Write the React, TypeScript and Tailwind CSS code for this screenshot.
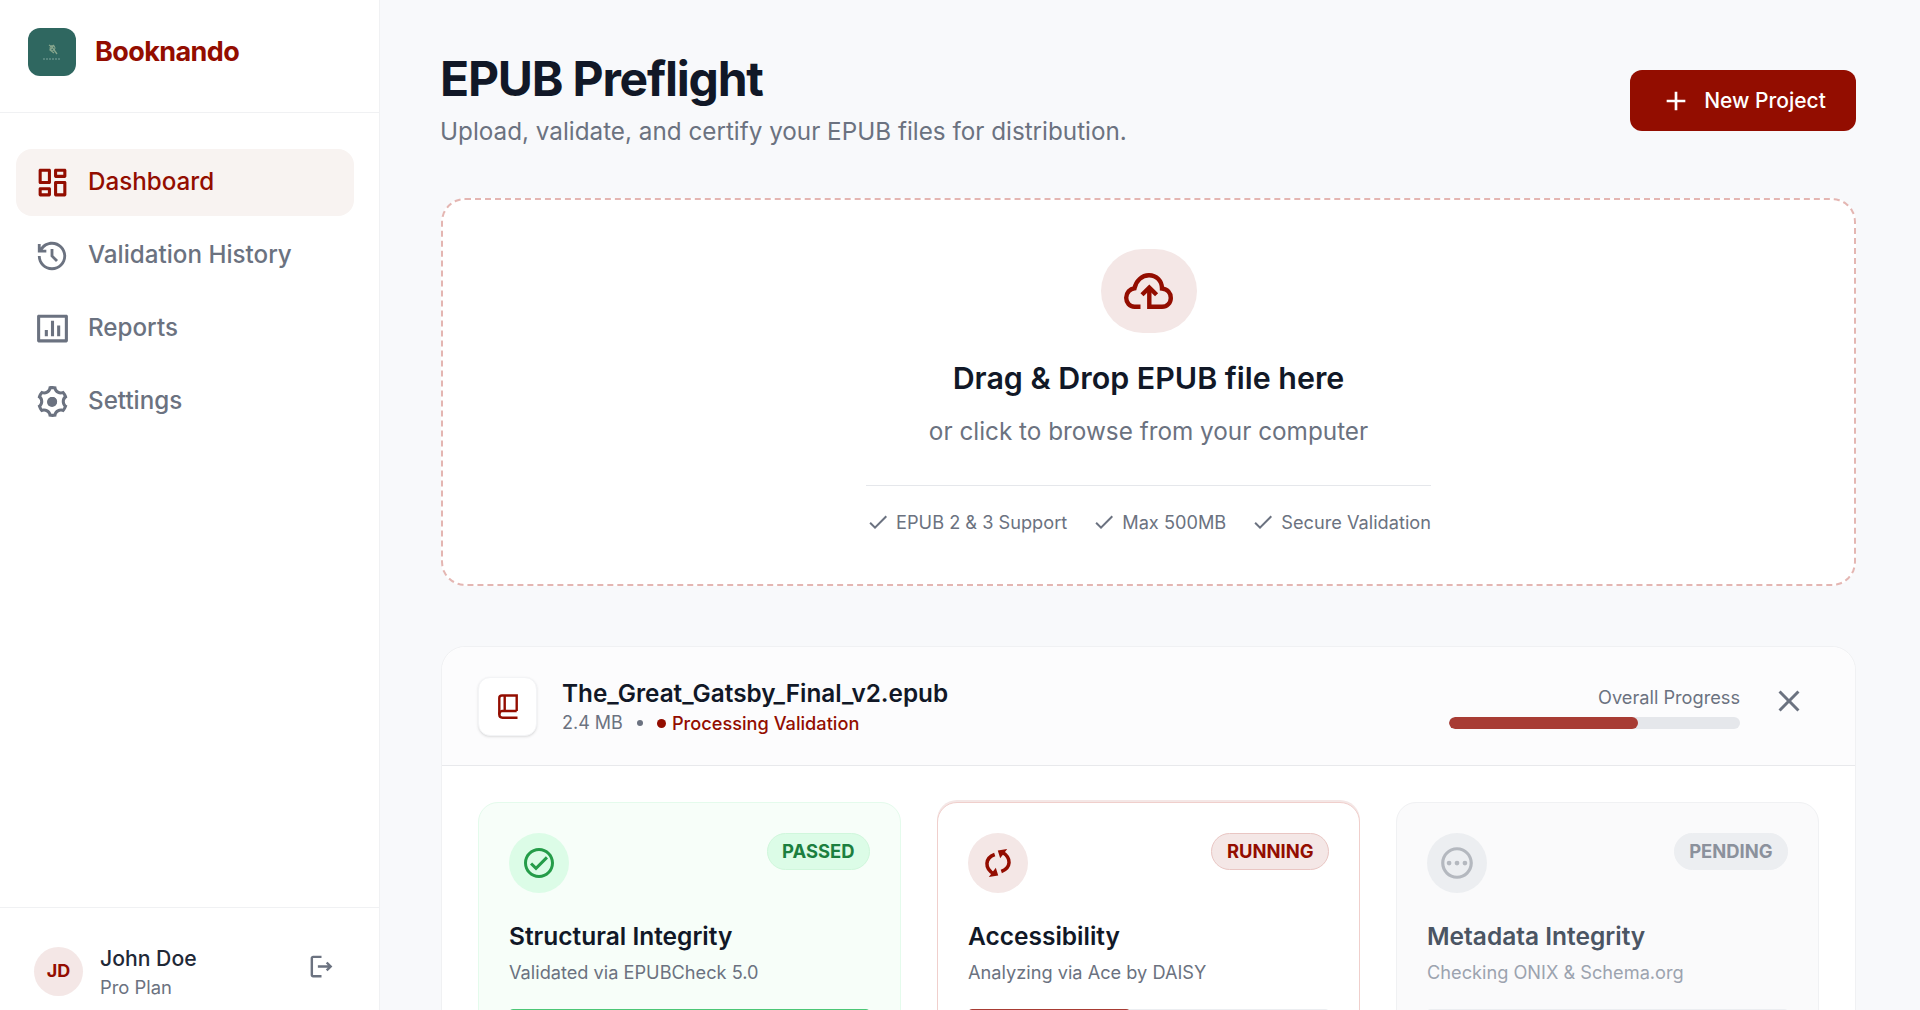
import type { ReactNode } from "react";
import {
  MdAdd,
  MdCheck,
  MdClose,
  MdOutlineCheckCircle,
  MdOutlineLogout,
  MdOutlinePending,
} from "react-icons/md";
import { RiBarChartBoxLine, RiDashboardLine, RiHistoryLine, RiSettings3Line } from "react-icons/ri";

function GearIcon() {
  return (
    <span className="relative flex shrink-0">
      <RiSettings3Line className="size-[37px]" />
      <span className="absolute inset-0 m-auto size-[10px] rounded-full bg-current" />
    </span>
  );
}

const navItems = [
  { label: "Dashboard", icon: <RiDashboardLine className="size-[37px] shrink-0" />, active: true },
  { label: "Validation History", icon: <RiHistoryLine className="size-[34px] shrink-0" /> },
  { label: "Reports", icon: <RiBarChartBoxLine className="size-[37px] shrink-0" /> },
  { label: "Settings", icon: <GearIcon /> },
];

function LogoMark() {
  return (
    <svg viewBox="0 0 48 48" className="size-12 rounded-xl bg-[#2f6760]">
      <path d="M21 17l3 2 5 7M26 17l-4 5 4 3" fill="none" stroke="#86a58c" strokeWidth="1.3" />
      <circle cx="24.5" cy="20" r="2.5" fill="none" stroke="#8aa890" />
      <path d="M15 31h18" stroke="#7fa59c" strokeWidth="1" strokeDasharray="2 1" />
    </svg>
  );
}

function CloudUpload() {
  return (
    <svg viewBox="0 0 49 36" className="h-9 w-[49px]" fill="none" stroke="#930d00" strokeWidth="4.4">
      <path d="M16.5 33.8H10.5C5.5 33.8 2.2 29.5 2.2 24.8C2.2 19.8 6 15.7 10.5 15.2C12 8 17.8 2.2 25 2.2C32.5 2.2 38 8 38 15.5C43.3 16 46.8 20 46.8 25C46.8 30 43 33.8 38 33.8H25.3V15" />
      <path d="M18 21.8L25.3 14.6L32.6 21.8" />
    </svg>
  );
}

function BookIcon() {
  return (
    <svg viewBox="0 0 20 25" className="h-[25px] w-5" fill="none" stroke="#930d00" strokeWidth="2.4">
      <path d="M18.7 17V1.5H4C2.5 1.5 1.3 2.6 1.3 4V20.5C1.3 22.4 2.6 23.7 4.5 23.7H19.5" />
      <path d="M6.7 1.5V17M18.7 17H4C2.4 17 1.3 18.6 1.3 20.4" />
    </svg>
  );
}

function SyncIcon() {
  return (
    <svg viewBox="0 0 60 60" className="size-[60px]" fill="none" stroke="#930d00" strokeWidth="3.5">
      <path d="M26.7 21.5C17 25 16 35 26 41" />
      <path d="M33.3 38.5C43 35 44 25 34 19" />
      <path d="M20.8 44L30.2 42.5L27.8 34.8Z" fill="#930d00" stroke="none" />
      <path d="M39.2 16L29.8 17.5L32.2 25.2Z" fill="#930d00" stroke="none" />
    </svg>
  );
}

function Sidebar() {
  return (
    <aside className="flex h-full w-[380px] shrink-0 flex-col border-r border-[#f0f1f3] bg-white">
      <div className="flex h-[113px] shrink-0 items-center gap-[19px] border-b border-[#f0f1f3] pb-2 pl-7">
        <LogoMark />
        <span className="text-[27px] font-bold tracking-[-0.6px] text-[#930d00]">Booknando</span>
      </div>
      <nav className="flex flex-1 flex-col gap-[6px] pl-4 pr-[25px] pt-9">
        {navItems.map((item) => (
          <a
            key={item.label}
            className={
              item.active
                ? "flex h-[67px] items-center gap-5 rounded-2xl bg-[#f8f3f1] pl-5 text-[#930d00]"
                : "flex h-[67px] items-center gap-5 rounded-2xl pl-5 text-[#6b7280]"
            }
          >
            <span className="flex w-8 justify-center">{item.icon}</span>
            <span className="text-[24.2px] font-medium">{item.label}</span>
          </a>
        ))}
      </nav>
      <div className="flex h-[103px] shrink-0 items-center border-t border-[#f0f1f3] pl-[34px] pr-[43px] pt-6">
        <div className="flex size-[49px] items-center justify-center rounded-full bg-[#f4e7e6] text-lg font-bold text-[#930d00]">
          JD
        </div>
        <div className="ml-[17px] flex-1">
          <p className="text-[21.2px] font-medium leading-8 text-[#1f2937]">John Doe</p>
          <p className="text-[18.4px] leading-[26px] text-[#6b7280]">Pro Plan</p>
        </div>
        <MdOutlineLogout className="mb-[10px] size-[29px] text-[#6b7280]" />
      </div>
    </aside>
  );
}

function DropZone() {
  const features = ["EPUB 2 & 3 Support", "Max 500MB", "Secure Validation"];
  return (
    <section className="mt-[50px] flex h-[388px] flex-col items-center rounded-3xl border-2 border-dashed border-[#e4b6b2] bg-white pt-[49px]">
      <div className="flex h-[84px] w-24 items-center justify-center rounded-full bg-[#f4e7e6]">
        <CloudUpload />
      </div>
      <h2 className="mt-[23px] text-[30.4px] font-semibold leading-[44px] text-[#111827]">
        Drag &amp; Drop EPUB file here
      </h2>
      <p className="mt-[13px] text-[24.3px] leading-9 text-[#6b7280]">or click to browse from your computer</p>
      <div className="mt-9 flex gap-[25px] border-t border-[#e5e7eb] pt-[22px]">
        {features.map((f) => (
          <span key={f} className="flex items-center gap-[6px] text-[18.2px] leading-7 text-[#6b7280]">
            <MdCheck className="size-6 shrink-0" />
            {f}
          </span>
        ))}
      </div>
    </section>
  );
}

type CheckCardProps = {
  icon: ReactNode;
  iconClass: string;
  badge: string;
  badgeClass: string;
  title: string;
  titleClass: string;
  desc: string;
  descClass: string;
  cardClass: string;
  trackClass: string;
  fillClass: string;
  percent: number;
};

function CheckCard(props: CheckCardProps) {
  return (
    <div className={`rounded-[20px] p-[30px] ${props.cardClass}`}>
      <div className="flex items-start justify-between">
        <div className={`flex size-[60px] items-center justify-center rounded-full ${props.iconClass}`}>
          {props.icon}
        </div>
        <span className={`flex h-[37px] items-center rounded-full border px-[14.5px] text-[18.4px] font-bold ${props.badgeClass}`}>
          {props.badge}
        </span>
      </div>
      <h3 className={`mt-[25px] text-[24.5px] font-semibold leading-9 ${props.titleClass}`}>{props.title}</h3>
      <p className={`mt-1 text-[18.2px] leading-7 ${props.descClass}`}>{props.desc}</p>
      <div className={`mt-[23px] h-2 overflow-hidden rounded-full ${props.trackClass}`}>
        <div className={`h-full rounded-full ${props.fillClass}`} style={{ width: `${props.percent}%` }} />
      </div>
    </div>
  );
}

function ValidationPanel() {
  return (
    <section className="mt-[60px] rounded-t-3xl border border-[#f0f1f3] bg-white">
      <div className="flex h-[119px] items-center rounded-t-3xl border-b border-[#e8e9ec] bg-[#fcfcfd] pl-[36px] pr-[48px]">
        <div className="flex size-[59px] items-center justify-center rounded-xl border border-[#f3f4f6] bg-white shadow-sm">
          <BookIcon />
        </div>
        <div className="ml-[25px] flex-1">
          <p className="text-[24.3px] font-semibold leading-8 text-[#111827]">The_Great_Gatsby_Final_v2.epub</p>
          <div className="mt-[2px] flex items-center text-lg leading-6 text-[#6b7280]">
            <span>2.4 MB</span>
            <span className="ml-[14px] size-[6px] rounded-full bg-[#6b7280]" />
            <span className="ml-[14px] size-[9px] rounded-full bg-[#930d00]" />
            <span className="ml-[6px] text-[18.2px] font-medium text-[#930d00]">Processing Validation</span>
          </div>
        </div>
        <div className="flex w-[291px] flex-col items-end">
          <span className="text-[18.2px] leading-7 text-[#6b7280]">Overall Progress</span>
          <div className="mt-[6px] h-3 w-full overflow-hidden rounded-full bg-[#e5e7eb]">
            <div className="h-full rounded-full bg-[#a83c34]" style={{ width: "65%" }} />
          </div>
        </div>
        <MdClose className="mb-[10px] ml-[31px] size-9 text-[#6b7280]" />
      </div>
      <div className="grid grid-cols-3 gap-[36px] px-[36px] pt-[36px]">
        <CheckCard
          icon={<MdOutlineCheckCircle className="size-9 text-[#259c49]" />}
          iconClass="bg-[#dcfce7]"
          badge="PASSED"
          badgeClass="border-[#d0f7dc] bg-[#dcfce7] text-[#1c7f3f]"
          title="Structural Integrity"
          titleClass="text-[#111827]"
          desc="Validated via EPUBCheck 5.0"
          descClass="text-[#6b7280]"
          cardClass="border border-[#e4fbec] bg-[#f7fef9]"
          trackClass="bg-[#e5e7eb]"
          fillClass="bg-[#4cc776]"
          percent={100}
        />
        <CheckCard
          icon={<SyncIcon />}
          iconClass="bg-[#f4e7e6]"
          badge="RUNNING"
          badgeClass="border-[#e9c6c3] bg-[#f4e7e6] text-[#930d00]"
          title="Accessibility"
          titleClass="text-[#111827]"
          desc="Analyzing via Ace by DAISY"
          descClass="text-[#6b7280]"
          cardClass="border border-[#f0cfcc] bg-white shadow-[0_-2px_0_#f4e7e6]"
          trackClass="bg-[#eceef1]"
          fillClass="bg-[#a83c34]"
          percent={45}
        />
        <CheckCard
          icon={<MdOutlinePending className="size-[38px] text-[#b4b8bf]" />}
          iconClass="bg-[#eceef1]"
          badge="PENDING"
          badgeClass="border-[#eceef1] bg-[#eceef1] text-[#8b919c]"
          title="Metadata Integrity"
          titleClass="text-[#4b5563]"
          desc="Checking ONIX & Schema.org"
          descClass="text-[#9ca3af]"
          cardClass="border border-[#f0f1f3] bg-[#fafafb]"
          trackClass="bg-[#eceef1]"
          fillClass="bg-[#d1d5db]"
          percent={0}
        />
      </div>
    </section>
  );
}

export default function App() {
  return (
    <div className="flex h-[1010px] overflow-hidden bg-[#f8f9fb] font-['Inter',sans-serif]">
      <Sidebar />
      <main className="h-full flex-1 overflow-hidden pl-[61px] pr-[64px] pt-[47px]">
        <div className="flex items-start justify-between">
          <div>
            <h1 className="-ml-px text-5xl font-bold leading-[64px] tracking-[-1.2px] text-[#111827]">EPUB Preflight</h1>
            <p className="-ml-px mt-[5px] text-[24.25px] leading-8 text-[#6b7280]">
              Upload, validate, and certify your EPUB files for distribution.
            </p>
          </div>
          <button className="mt-[23px] flex h-[61px] w-[226px] items-center justify-center gap-3 rounded-xl bg-[#930d00] text-[21px] font-medium text-white">
            <MdAdd className="size-8" />
            New Project
          </button>
        </div>
        <DropZone />
        <ValidationPanel />
      </main>
    </div>
  );
}
